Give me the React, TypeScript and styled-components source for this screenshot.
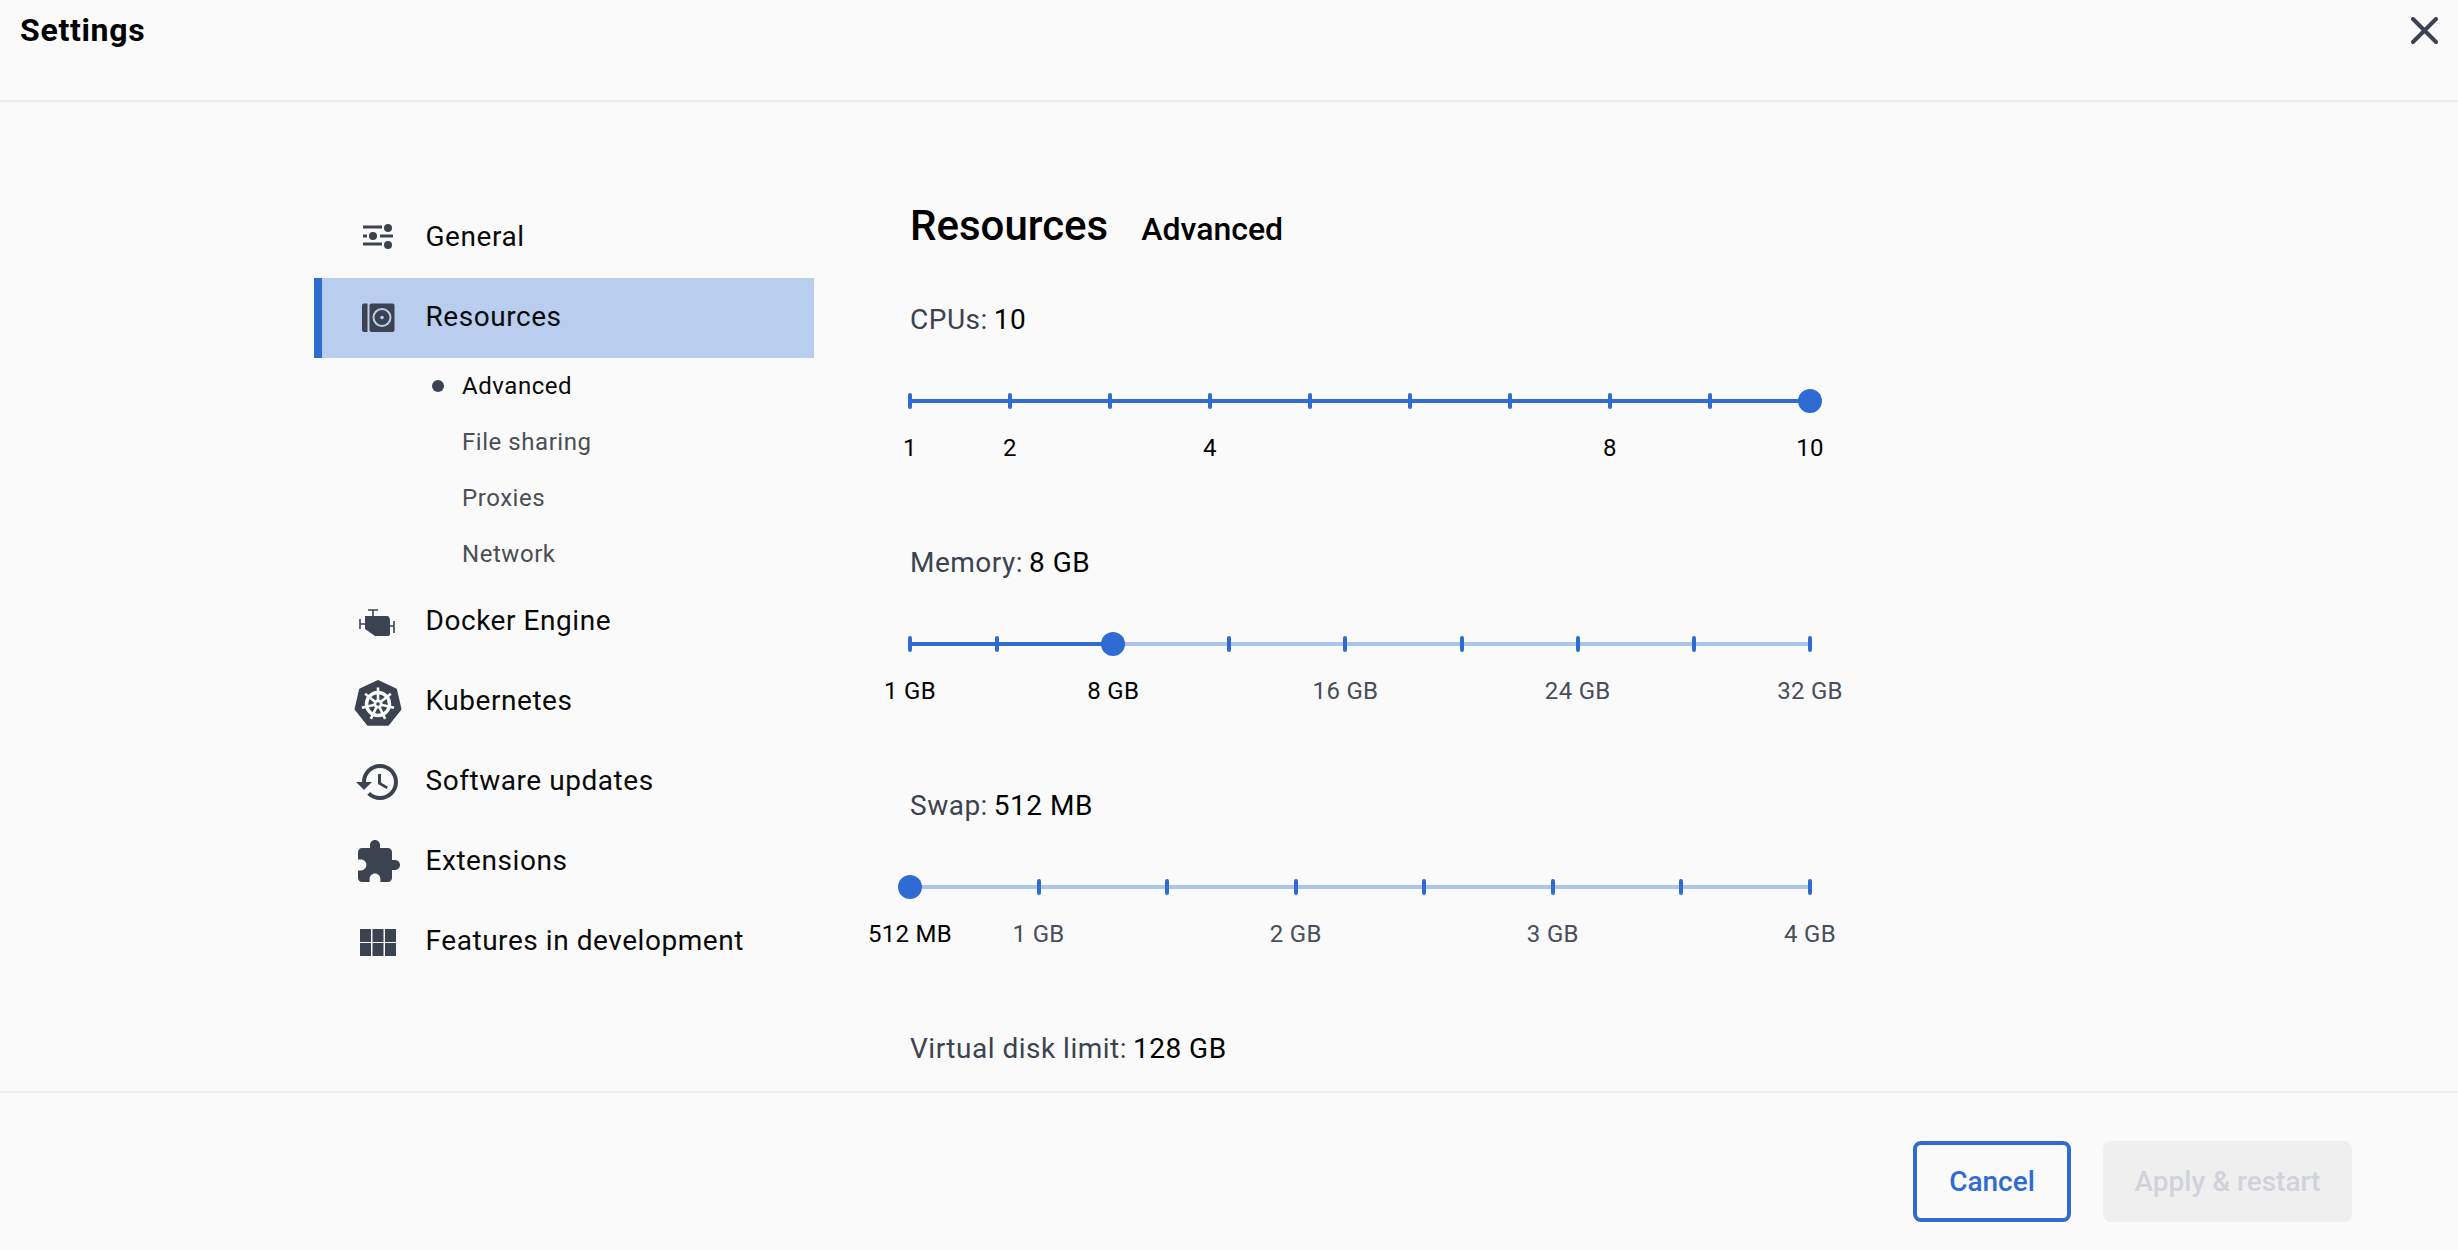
import styled, { createGlobalStyle } from "styled-components";

const GlobalStyle = createGlobalStyle`
  html, body {
    margin: 0;
    padding: 0;
    background: #fafafa;
    overflow: hidden;
  }
  body {
    font-family: Roboto, "Liberation Sans", sans-serif;
    color: #000;
  }
`;

const ICON = "#3c4350";
const BLUE = "#306bd4";
const LIGHT = "#aac4ec";

const heptagon = [0, 1, 2, 3, 4, 5, 6]
  .map((i) => {
    const a = ((-90 + (i * 360) / 7) * Math.PI) / 180;
    return `${24 + 22.5 * Math.cos(a)},${26 + 22.5 * Math.sin(a)}`;
  })
  .join(" ");

const spokes = [0, 1, 2, 3, 4, 5, 6].map((i) => {
  const a = ((-90 + (i * 360) / 7) * Math.PI) / 180;
  return {
    x: 24 + 16.5 * Math.cos(a),
    y: 26 + 16.5 * Math.sin(a),
  };
});

const GeneralIcon = () => (
  <svg width="48" height="48" viewBox="0 0 48 48" fill={ICON} stroke={ICON}>
    <path d="M9 13H28M9 22H13M26 22H39M9 30H28" strokeWidth="3" fill="none" />
    <circle cx="34" cy="14" r="4" stroke="none" />
    <circle cx="19" cy="22" r="4" stroke="none" />
    <circle cx="34" cy="31" r="4" stroke="none" />
  </svg>
);

const ResourcesIcon = () => (
  <svg width="48" height="48" viewBox="0 0 48 48">
    <path d="M10 9.5h3.5V38H10a2 2 0 0 1-2-2V11.5a2 2 0 0 1 2-2z" fill={ICON} />
    <rect x="15.5" y="9.5" width="25" height="28.5" rx="2" fill={ICON} />
    <circle cx="28" cy="23.5" r="8.5" fill="none" stroke="#b9cdee" strokeWidth="2" />
    <circle cx="28" cy="23.5" r="1.8" fill="#b9cdee" />
  </svg>
);

const EngineIcon = () => (
  <svg width="48" height="48" viewBox="0 0 48 48">
    <path d="M14 12H24M19 12V19M6 21V31M6 26H11M36 28H40M40 23V35" stroke={ICON} strokeWidth="1.6" fill="none" />
    <path d="M11 18H34L36 21V36Q36 38 34 38H21L11 31Z" fill={ICON} />
  </svg>
);

const KubernetesIcon = () => (
  <svg width="48" height="48" viewBox="0 0 48 48">
    <polygon points={heptagon} fill={ICON} stroke={ICON} strokeWidth="3" strokeLinejoin="round" />
    <circle cx="24" cy="26" r="11.5" fill="none" stroke="#fafafa" strokeWidth="3.5" />
    {spokes.map((s, i) => (
      <line key={i} x1="24" y1="26" x2={s.x} y2={s.y} stroke="#fafafa" strokeWidth="2.6" />
    ))}
    <circle cx="24" cy="26" r="4.5" fill="#fafafa" />
    <circle cx="24" cy="26" r="1.8" fill={ICON} />
  </svg>
);

const HistoryIcon = () => (
  <svg width="48" height="48" viewBox="0 0 24 24" fill={ICON}>
    <path d="M13 3c-4.97 0-9 4.03-9 9H1l3.89 3.89.07.14L9 12H6c0-3.87 3.13-7 7-7s7 3.13 7 7-3.13 7-7 7c-1.93 0-3.68-.79-4.94-2.06l-1.42 1.42C8.27 19.99 10.51 21 13 21c4.97 0 9-4.03 9-9s-4.03-9-9-9zm-1 5v5l4.28 2.54.72-1.21-3.5-2.08V8H12z" />
  </svg>
);

const PuzzleIcon = () => (
  <svg width="48" height="48" viewBox="0 0 24 24" fill={ICON}>
    <path d="M20.5 11H19V7c0-1.1-.9-2-2-2h-4V3.5C13 2.12 11.88 1 10.5 1S8 2.12 8 3.5V5H4c-1.1 0-1.99.9-1.99 2v3.8H3.5c1.49 0 2.7 1.21 2.7 2.7s-1.21 2.7-2.7 2.7H2V20c0 1.1.9 2 2 2h3.8v-1.5c0-1.49 1.21-2.7 2.7-2.7 1.49 0 2.7 1.21 2.7 2.7V22H17c1.1 0 2-.9 2-2v-4h1.5c1.38 0 2.5-1.12 2.5-2.5S21.88 11 20.5 11z" />
  </svg>
);

const GridIcon = () => (
  <svg width="48" height="48" viewBox="0 0 48 48" fill={ICON}>
    {[6, 18.5, 31].map((x) =>
      [11, 25].map((y) => <rect key={`${x}-${y}`} x={x} y={y} width="11" height="13" />)
    )}
  </svg>
);

type Mark = { at: number; label?: string; on?: boolean };

const cpus: Mark[] = [
  { at: 1, label: "1", on: true },
  { at: 2, label: "2", on: true },
  { at: 3 },
  { at: 4, label: "4", on: true },
  { at: 5 },
  { at: 6 },
  { at: 7 },
  { at: 8, label: "8", on: true },
  { at: 9 },
  { at: 10, label: "10", on: true },
];

const memory: Mark[] = [
  { at: 1, label: "1 GB", on: true },
  { at: 4 },
  { at: 8, label: "8 GB", on: true },
  { at: 12 },
  { at: 16, label: "16 GB" },
  { at: 20 },
  { at: 24, label: "24 GB" },
  { at: 28 },
  { at: 32, label: "32 GB" },
];

const swap: Mark[] = [
  { at: 0.5, label: "512 MB", on: true },
  { at: 1, label: "1 GB" },
  { at: 1.5 },
  { at: 2, label: "2 GB" },
  { at: 2.5 },
  { at: 3, label: "3 GB" },
  { at: 3.5 },
  { at: 4, label: "4 GB" },
];

const Slider = ({
  marks,
  min,
  max,
  value,
}: {
  marks: Mark[];
  min: number;
  max: number;
  value: number;
}) => {
  const pct = (v: number) => `${((v - min) / (max - min)) * 100}%`;
  return (
    <SliderBox>
      <Rail>
        <Fill style={{ width: pct(value) }} />
        {marks.map((m) =>
          m.at === value ? null : <Tick key={m.at} style={{ left: pct(m.at) }} />
        )}
        <Thumb style={{ left: pct(value) }} />
      </Rail>
      {marks.map((m) =>
        m.label ? (
          <MarkLabel key={m.at} $on={m.on} style={{ left: pct(m.at) }}>
            {m.label}
          </MarkLabel>
        ) : null
      )}
    </SliderBox>
  );
};

const App = () => {
  return (
    <Page>
      <GlobalStyle />
      <Header>
        <Title>Settings</Title>
        <CloseButton aria-label="Close">
          <svg width="27" height="27" viewBox="0 0 27 27">
            <path d="M2 2L25 25M25 2L2 25" stroke={ICON} strokeWidth="4" strokeLinecap="round" />
          </svg>
        </CloseButton>
      </Header>
      <Body>
        <Sidebar>
          <NavItem>
            <GeneralIcon />
            General
          </NavItem>
          <NavItem $active>
            <ResourcesIcon />
            Resources
          </NavItem>
          <SubItem $active>Advanced</SubItem>
          <SubItem>File sharing</SubItem>
          <SubItem>Proxies</SubItem>
          <SubItem>Network</SubItem>
          <NavItem>
            <EngineIcon />
            Docker Engine
          </NavItem>
          <NavItem>
            <KubernetesIcon />
            Kubernetes
          </NavItem>
          <NavItem>
            <HistoryIcon />
            Software updates
          </NavItem>
          <NavItem>
            <PuzzleIcon />
            Extensions
          </NavItem>
          <NavItem>
            <GridIcon />
            Features in development
          </NavItem>
        </Sidebar>
        <Content>
          <Headings>
            <H1>Resources</H1>
            <H2>Advanced</H2>
          </Headings>
          <Setting>
            <Label>
              CPUs: <b>10</b>
            </Label>
            <Slider marks={cpus} min={1} max={10} value={10} />
          </Setting>
          <Setting>
            <Label>
              Memory: <b>8 GB</b>
            </Label>
            <Slider marks={memory} min={1} max={32} value={8} />
          </Setting>
          <Setting>
            <Label>
              Swap: <b>512 MB</b>
            </Label>
            <Slider marks={swap} min={0.5} max={4} value={0.5} />
          </Setting>
          <Setting>
            <Label>
              Virtual disk limit: <b>128 GB</b>
            </Label>
          </Setting>
        </Content>
      </Body>
      <Footer>
        <CancelButton>Cancel</CancelButton>
        <ApplyButton disabled>Apply &amp; restart</ApplyButton>
      </Footer>
    </Page>
  );
};

export default App;

const Page = styled.div`
  width: 100%;
  height: 1250px;
  display: flex;
  flex-direction: column;
  overflow: hidden;
  background: #fafafa;
`;

const Header = styled.div`
  height: 100px;
  flex: none;
  display: flex;
  justify-content: space-between;
  align-items: flex-start;
  padding: 0 20px;
  border-bottom: 2px solid #ededed;
`;

const Title = styled.div`
  font-size: 32px;
  font-weight: 700;
  line-height: 60px;
  letter-spacing: 0.7px;
  color: #000;
`;

const CloseButton = styled.button`
  border: none;
  background: none;
  padding: 0;
  margin-top: 17px;
  height: 27px;
  display: flex;
`;

const Body = styled.div`
  flex: 1;
  min-height: 0;
  display: flex;
  overflow: hidden;
  padding: 96px 0 0 314px;
`;

const Sidebar = styled.nav`
  width: 500px;
  flex: none;
  display: flex;
  flex-direction: column;
`;

const NavItem = styled.div<{ $active?: boolean }>`
  height: 80px;
  flex: none;
  box-sizing: border-box;
  display: flex;
  align-items: center;
  gap: 25px;
  padding: 0 0 2px ${(p) => (p.$active ? "32px" : "40px")};
  border-left: ${(p) => (p.$active ? `8px solid ${BLUE}` : "none")};
  background: ${(p) => (p.$active ? "#b9cdee" : "transparent")};
  font-size: 28px;
  letter-spacing: 0.55px;
  color: #0a0a0a;
  text-indent: -1.5px;
  line-height: 36px;

  svg {
    flex: none;
    margin-top: 2px;
  }
`;

const SubItem = styled.div<{ $active?: boolean }>`
  height: 56px;
  flex: none;
  box-sizing: border-box;
  display: flex;
  align-items: center;
  padding: 0 0 1px 148px;
  position: relative;
  font-size: 24px;
  letter-spacing: 0.55px;
  color: ${(p) => (p.$active ? "#0a0a0a" : "#4c4e54")};

  &::before {
    content: "";
    display: ${(p) => (p.$active ? "block" : "none")};
    position: absolute;
    left: 118px;
    width: 12px;
    height: 12px;
    border-radius: 50%;
    background: ${ICON};
  }
`;

const Content = styled.main`
  flex: 1;
  display: flex;
  flex-direction: column;
  padding: 0 0 0 96px;
`;

const Headings = styled.div`
  display: flex;
  align-items: baseline;
  gap: 33px;
  height: 101px;
  margin-top: 1px;
  flex: none;
`;

const H1 = styled.div`
  font-size: 42px;
  font-weight: 500;
  line-height: 54px;
  color: #000;
`;

const H2 = styled.div`
  font-size: 32px;
  font-weight: 500;
  color: #000;
`;

const Setting = styled.section`
  height: 243px;
  flex: none;
`;

const Label = styled.div`
  font-size: 28px;
  line-height: 40px;
  color: ${ICON};
  letter-spacing: 0.5px;

  b {
    font-weight: 400;
    color: #000;
    margin-left: -1.5px;
  }
`;

const SliderBox = styled.div`
  position: relative;
  width: 900px;
  margin-top: 59px;
  height: 80px;
`;

const Rail = styled.div`
  position: relative;
  height: 4px;
  background: ${LIGHT};
`;

const Fill = styled.div`
  height: 100%;
  background: ${BLUE};
`;

const Tick = styled.span`
  position: absolute;
  top: -6px;
  width: 4px;
  height: 16px;
  margin-left: -2px;
  border-radius: 2px;
  background: ${BLUE};
`;

const Thumb = styled.span`
  position: absolute;
  top: -10px;
  width: 24px;
  height: 24px;
  margin-left: -12px;
  border-radius: 50%;
  background: ${BLUE};
`;

const MarkLabel = styled.span<{ $on?: boolean }>`
  position: absolute;
  top: 34px;
  transform: translateX(-50%);
  font-size: 24px;
  line-height: 30px;
  letter-spacing: 0.3px;
  white-space: nowrap;
  color: ${(p) => (p.$on ? "#000" : "#484e5a")};
`;

const Footer = styled.div`
  height: 159px;
  flex: none;
  box-sizing: border-box;
  border-top: 2px solid #ededed;
  display: flex;
  justify-content: flex-end;
  align-items: flex-start;
  gap: 32px;
  padding: 48px 106px 0 0;
`;

const CancelButton = styled.button`
  width: 158px;
  height: 81px;
  box-sizing: border-box;
  border: 4px solid ${BLUE};
  border-radius: 8px;
  background: transparent;
  color: ${BLUE};
  font-family: inherit;
  font-size: 28px;
  font-weight: 500;
`;

const ApplyButton = styled.button`
  width: 249px;
  height: 81px;
  border: none;
  border-radius: 8px;
  background: #efefef;
  color: #d0d3dc;
  font-family: inherit;
  font-size: 28px;
  font-weight: 500;
`;
